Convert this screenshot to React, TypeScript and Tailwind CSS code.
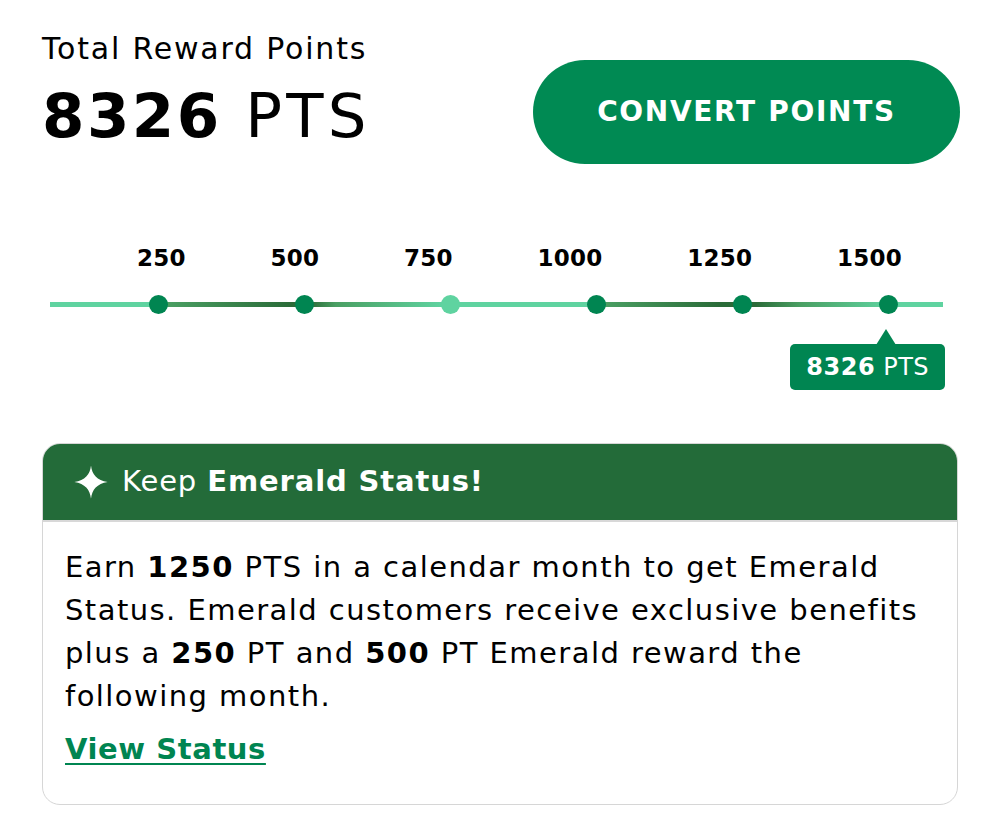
const milestones = [250, 500, 750, 1000, 1250, 1500]

function Sparkle() {
  return (
    <svg width="38" height="38" viewBox="0 0 24 24" fill="white" aria-hidden>
      <path d="M12 1.5C12.6 7.2 15.8 10.9 22.5 12C15.8 13.1 12.6 16.8 12 22.5C11.4 16.8 8.2 13.1 1.5 12C8.2 10.9 11.4 7.2 12 1.5Z" />
    </svg>
  )
}

function Track() {
  return (
    <div className="relative -mx-[42px] mt-[79px]">
      <div className="flex justify-between pl-[137px] pr-[98px]">
        {milestones.map((m) => (
          <span key={m} className="text-[23px] font-bold leading-[30px] tracking-[0.01em] text-black">
            {m}
          </span>
        ))}
      </div>
      <div className="relative mt-[22px]">
        <div className="absolute left-[50px] top-[7px] h-[5px] w-[893px] bg-[linear-gradient(to_right,#5fd3a0_0%,#5fd3a0_12%,#4a9f63_13%,#2a6b38_27%,#2a6b38_29%,#4a9f63_32%,#5fd3a0_44%,#5fd3a0_61%,#4a9f63_62%,#2a6b38_75%,#2a6b38_79%,#4a9f63_84%,#5fd3a0_94%,#5fd3a0_100%)]" />
        <div className="relative flex pl-[85px]">
          {milestones.map((m) => (
            <div key={m} className="flex w-[146px] justify-center">
              <span
                className={
                  m === 750
                    ? 'h-[19px] w-[19px] rounded-full bg-[#5fd3a0]'
                    : 'h-[19px] w-[19px] rounded-full bg-[#008551]'
                }
              />
            </div>
          ))}
        </div>
      </div>
      <div className="relative mt-[30px] flex justify-end pr-[55px]">
        <div className="relative rounded-[5px] bg-[#008551] px-[16px] py-[6px] text-[24px] leading-[34px] tracking-[0.02em] text-white">
          <span className="absolute -top-[15px] left-[86px] h-0 w-0 border-x-[10px] border-b-[16px] border-x-transparent border-b-[#008551]" />
          <span className="font-bold">8326</span>
          <span> PTS</span>
        </div>
      </div>
    </div>
  )
}

export default function App() {
  return (
    <div className="min-h-[840px] bg-white px-[42px] pt-[30px] font-['DejaVu_Sans',sans-serif] text-black">
      <div className="flex items-start justify-between">
        <div className="flex flex-col">
          <span className="text-[30px] leading-[38px] tracking-[0.06em]">Total Reward Points</span>
          <div className="mt-[11px] text-[61px] leading-[74px]">
            <span className="font-black tracking-[0.04em]">8326</span>
            <span className="tracking-[0.07em]"> PTS</span>
          </div>
        </div>
        <button className="mt-[30px] mr-[-2px] h-[104px] w-[427px] rounded-full bg-[#008a53] text-[28px] font-bold tracking-[0.06em] text-white">
          CONVERT POINTS
        </button>
      </div>

      <Track />

      <div className="mt-[53px] overflow-hidden rounded-[18px] border border-[#d6d6d6]">
        <div className="flex h-[78px] items-center gap-[12px] border-b-2 border-[#d8d8d8] bg-[#236b39] pl-[29px] text-[29px] tracking-[0.03em] text-white">
          <Sparkle />
          <div>
            <span>Keep </span>
            <span className="font-bold">Emerald Status!</span>
          </div>
        </div>
        <div className="pl-[22px] pr-[10px] pt-[24px] pb-[33px] text-[29px] leading-[43px] tracking-[0.05em]">
          <p>
            <span>Earn </span>
            <span className="font-bold">1250</span>
            <span> PTS in a calendar month to get Emerald Status. Emerald customers receive exclusive benefits plus a </span>
            <span className="font-bold">250</span>
            <span> PT and </span>
            <span className="font-bold">500</span>
            <span> PT Emerald reward the following month.</span>
          </p>
          <a
            href="#"
            className="mt-[10px] inline-block font-semibold tracking-[0.02em] text-[#008551] underline decoration-2 underline-offset-4"
          >
            View Status
          </a>
        </div>
      </div>
    </div>
  )
}
